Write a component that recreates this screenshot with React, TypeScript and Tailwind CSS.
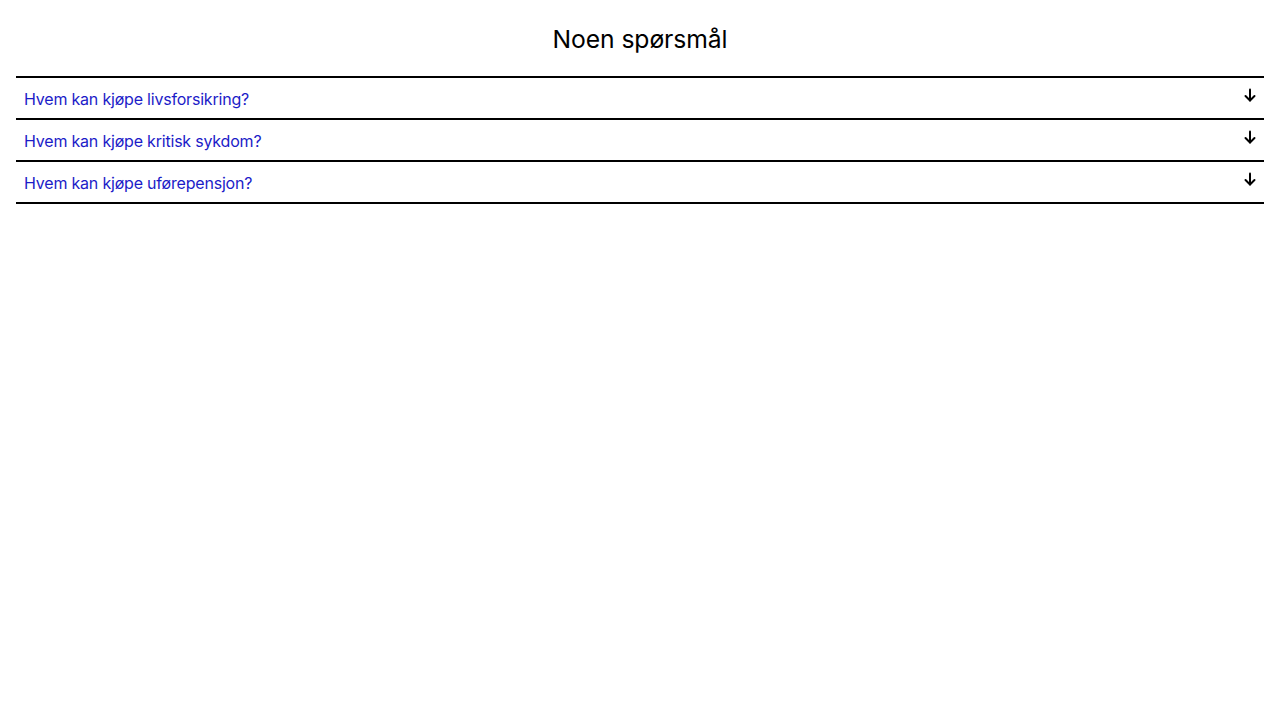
const questions = [
  "Hvem kan kjøpe livsforsikring?",
  "Hvem kan kjøpe kritisk sykdom?",
  "Hvem kan kjøpe uførepensjon?",
];

function ArrowDown() {
  return (
    <svg
      width="12"
      height="14"
      viewBox="0 0 12 14"
      fill="none"
      stroke="currentColor"
      strokeWidth="2"
      strokeLinecap="round"
      strokeLinejoin="round"
    >
      <path d="M6 1.5v11" />
      <path d="M1.5 8l4.5 4.5L10.5 8" />
    </svg>
  );
}

export default function App() {
  return (
    <div className="min-h-screen bg-white px-4 font-['Inter',sans-serif]">
      <h2 className="pt-[23px] pb-[21px] text-center text-[24.7px] leading-[32px] font-normal tracking-[-0.1px] text-black">
        Noen spørsmål
      </h2>
      <div className="border-b-2 border-black">
        {questions.map((q) => (
          <button
            key={q}
            className="flex h-[42px] w-full items-start justify-between border-t-2 border-black px-2 text-left"
          >
            <span className="pt-[10px] text-[16px] leading-[22px] tracking-[-0.2px] text-[#1c1cc8]">
              {q}
            </span>
            <span className="pt-[10px] text-black">
              <ArrowDown />
            </span>
          </button>
        ))}
      </div>
    </div>
  );
}
